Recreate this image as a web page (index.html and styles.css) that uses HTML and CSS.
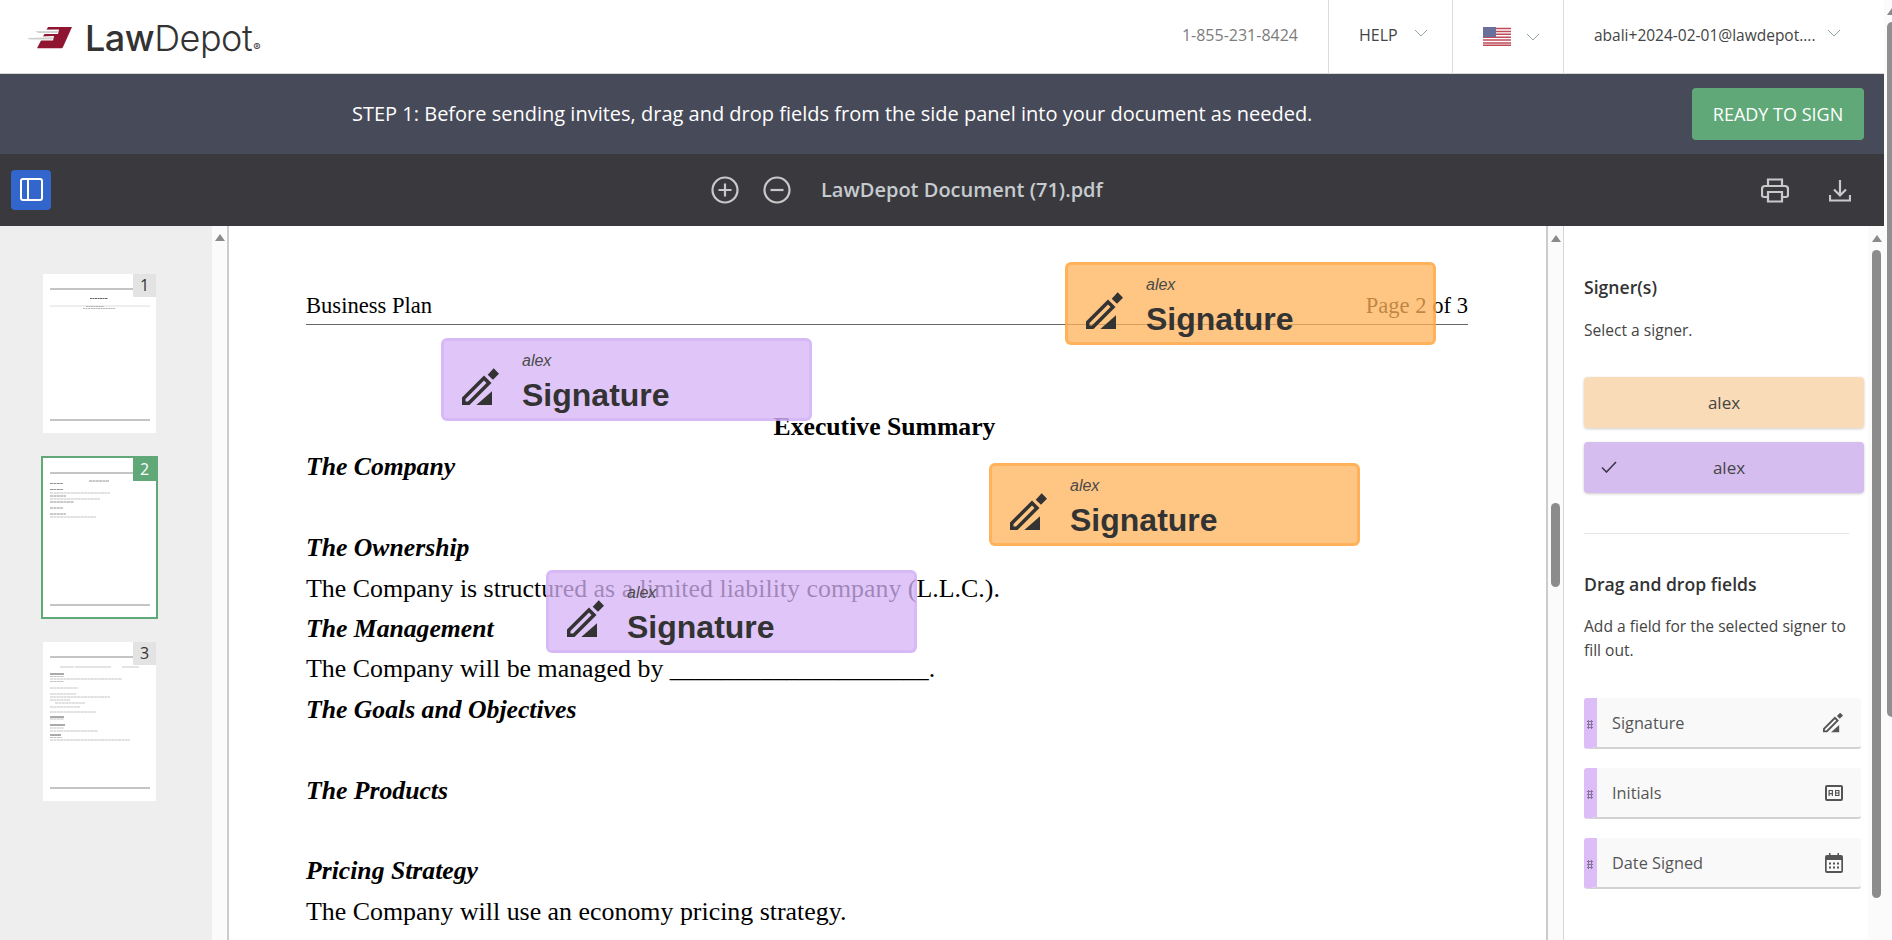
FILE: index.html
```html
<!DOCTYPE html>
<html lang="en">
<head>
    <meta charset="UTF-8">
    <meta name="viewport" content="width=device-width, initial-scale=1.0">
    <title>LawDepot - Sign Document</title>
    <link rel="stylesheet" href="styles.css">
</head>
<body>
    <svg class="icon-defs" width="0" height="0">
        <symbol id="pencil" viewBox="0 0 37 37">
            <path d="M25.700 6.700l6-6.400L37 5.700l-6 6z"/>
            <path fill-rule="evenodd" d="M0 37v-7.500L22 7.500 29.500 15l-22 22zM3.500 31v2.500H6L24.500 15 22 12.500z"/>
            <path d="M30 23.300V37H14.300z"/>
        </symbol>
    </svg>

    <div class="app">
        <header class="topbar">
            <div class="logo">
                <svg class="logo-mark" width="46" height="22" viewBox="0 0 46 22">
                    <path d="M21 0h24l-9 20c-.5 1-1 1.300-2 1.300H10z" fill="#8f1530"/>
                    <path d="M8 2.800l24-.300-1 4.500H12zM0 10l27-1-1 4.500H4z" fill="#fff"/>
                    <path d="M8 4.200l23-.300-.5 2.100H11.500zM0 11l26-.700-.5 2.200H3z" fill="#cfcfcf"/>
                </svg>
                <span class="logo-law">Law</span><span class="logo-depot">Depot</span><span class="logo-reg">®</span>
            </div>
            <nav class="topnav">
                <span class="nav-phone">1-855-231-8424</span>
                <div class="nav-item nav-help">HELP <svg class="chevron" viewBox="0 0 14 8"><path d="M1 1l6 6 6-6"/></svg></div>
                <div class="nav-item nav-lang">
                    <svg class="flag" viewBox="0 0 28 19">
                        <rect width="28" height="19" fill="#fff"/>
                        <path d="M0 1.500h28M0 4.400h28M0 7.300h28M0 10.200h28M0 13.100h28M0 16h28M0 18.300h28" stroke="#bf4a58" stroke-width="1.500"/>
                        <rect width="13" height="10" fill="#6a6f9c"/>
                    </svg>
                    <svg class="chevron" viewBox="0 0 14 8"><path d="M1 1l6 6 6-6"/></svg>
                </div>
                <div class="nav-item nav-user"><span>abali+2024-02-01@lawdepot....</span> <svg class="chevron" viewBox="0 0 14 8"><path d="M1 1l6 6 6-6"/></svg></div>
            </nav>
        </header>

        <section class="stepbar">
            <p class="step-text">STEP 1: Before sending invites, drag and drop fields from the side panel into your document as needed.</p>
            <button class="ready-btn">READY TO SIGN</button>
        </section>

        <section class="toolbar">
            <button class="panel-btn">
                <svg width="24" height="24" viewBox="0 0 24 24" fill="none" stroke="#fff" stroke-width="2"><rect x="2" y="2" width="21" height="21" rx="2"/><path d="M9 2v21"/></svg>
            </button>
            <div class="zoom-tools">
                <svg class="tool-icon" width="28" height="28" viewBox="0 0 28 28"><circle cx="14" cy="14" r="12.500"/><path d="M14 7.500v13M7.500 14h13"/></svg>
                <svg class="tool-icon" width="28" height="28" viewBox="0 0 28 28"><circle cx="14" cy="14" r="12.500"/><path d="M7.500 14h13"/></svg>
                <span class="doc-title">LawDepot Document (71).pdf</span>
            </div>
            <div class="doc-actions">
                <svg class="tool-icon" width="28" height="25" viewBox="0 0 28 25"><path d="M7 8V1.500h14V8M7 19H3c-1 0-2-1-2-2v-6c0-2 1-3 3-3h20c2 0 3 1 3 3v6c0 1-1 2-2 2h-4M7 14h14v9.500H7z"/></svg>
                <svg class="tool-icon" width="22" height="23" viewBox="0 0 22 23"><path d="M11 1v15M5 10.500l6 6 6-6M1 16v5.500h20V16"/></svg>
            </div>
        </section>

        <main class="workspace">
            <aside class="thumbs">
                <div class="thumb">
                    <span class="thumb-num">1</span>
                    <svg class="thumb-lines" viewBox="0 0 113 159">
                        <path d="M7 15h83M7 146h100" stroke="#8a8a8a"/>
                        <path d="M47 24.500h18" stroke="#666" stroke-dasharray="2 .5"/>
                        <path d="M7 32h100" stroke="#ddd"/>
                        <path d="M43 32.500h18M40 34.500h32" stroke="#999" stroke-width=".7" stroke-dasharray="2 .5"/>
                    </svg>
                </div>
                <div class="thumb thumb-active">
                    <span class="thumb-num">2</span>
                    <svg class="thumb-lines" viewBox="0 0 113 159">
                        <path d="M7 15h83M7 147h100" stroke="#8a8a8a"/>
                        <path d="M46 23h20M7 25.500h13M7 31.500h13M7 38h16M7 44h24M7 50h13M7 56h16" stroke="#888" stroke-width=".9" stroke-dasharray="3 .4"/>
                        <path d="M7 35h60M7 41h50M7 59h46" stroke="#b4b4b4" stroke-width=".8" stroke-dasharray="3 .4"/>
                    </svg>
                </div>
                <div class="thumb">
                    <span class="thumb-num">3</span>
                    <svg class="thumb-lines" viewBox="0 0 113 159">
                        <path d="M7 15h83M7 146h100" stroke="#8a8a8a"/>
                        <path d="M17 25h14M32 25h36M79 25h17" stroke="#bbb" stroke-width=".8"/>
                        <path d="M7 32h14M7 75h14M7 83h15M7 93h11" stroke="#444" stroke-width=".9"/>
                        <path d="M7 34.500h14M7 37h72M7 39.500h14M7 46h28M7 52h26M7 55h60M7 58h20M12 61h30M7 65h30M7 70h46M7 77h14M7 86h14M7 89h48M7 95.500h12M7 98h80" stroke="#b4b4b4" stroke-width=".8" stroke-dasharray="3 .4"/>
                    </svg>
                </div>
                <div class="strip"><span class="arrow-up"></span></div>
            </aside>

            <article class="document">
                <div class="page">
                    <div class="page-head"><span>Business Plan</span><span>Page 2 of 3</span></div>
                    <h3 class="page-title">Executive Summary</h3>
                    <p class="sub">The Company</p>
                    <p class="blank"></p>
                    <p class="sub">The Ownership</p>
                    <p>The Company is structured as a limited liability company (L.L.C.).</p>
                    <p class="sub">The Management</p>
                    <p>The Company will be managed by ____________________.</p>
                    <p class="sub">The Goals and Objectives</p>
                    <p class="blank"></p>
                    <p class="sub">The Products</p>
                    <p class="blank"></p>
                    <p class="sub">Pricing Strategy</p>
                    <p>The Company will use an economy pricing strategy.</p>
                </div>

                <div class="sig-field sig-orange sig-a">
                    <svg class="sig-icon"><use href="#pencil"/></svg>
                    <div><div class="sig-name">alex</div><div class="sig-label">Signature</div></div>
                </div>
                <div class="sig-field sig-purple sig-b">
                    <svg class="sig-icon"><use href="#pencil"/></svg>
                    <div><div class="sig-name">alex</div><div class="sig-label">Signature</div></div>
                </div>
                <div class="sig-field sig-orange sig-c">
                    <svg class="sig-icon"><use href="#pencil"/></svg>
                    <div><div class="sig-name">alex</div><div class="sig-label">Signature</div></div>
                </div>
                <div class="sig-field sig-purple sig-d">
                    <svg class="sig-icon"><use href="#pencil"/></svg>
                    <div><div class="sig-name">alex</div><div class="sig-label">Signature</div></div>
                </div>
            </article>

            <div class="doc-scroll">
                <span class="arrow-up"></span>
                <span class="doc-thumb"></span>
            </div>

            <aside class="side-panel">
                <h4>Signer(s)</h4>
                <p class="hint hint-signer">Select a signer.</p>
                <button class="signer signer-orange">alex</button>
                <button class="signer signer-purple">
                    <svg class="check" width="16" height="12" viewBox="0 0 16 12" fill="none" stroke="#3c3846" stroke-width="1.600"><path d="M1 6.500l4.500 4.500L15 1"/></svg>
                    <span>alex</span>
                </button>
                <hr class="divider">
                <h4>Drag and drop fields</h4>
                <p class="hint hint-fields">Add a field for the selected signer to fill out.</p>

                <div class="field">
                    <span class="grip"></span>
                    <span class="field-name">Signature</span>
                    <svg class="field-icon" width="20" height="21" viewBox="0 0 37 37"><use href="#pencil"/></svg>
                </div>
                <div class="field">
                    <span class="grip"></span>
                    <span class="field-name">Initials</span>
                    <svg class="field-icon" width="18" height="16" viewBox="0 0 18 16"><path fill-rule="evenodd" d="M2 0h14a2 2 0 0 1 2 2v12a2 2 0 0 1-2 2H2a2 2 0 0 1-2-2V2a2 2 0 0 1 2-2zm0 2v12h14V2z"/><path fill-rule="evenodd" d="M3.500 5h4.500v6H6.800V9.200H4.700V11H3.500zm1.200 1.100v2h2.100v-2zM10 5h4.500v6H10zm1.200 1.100v1.300h2.100V6.100zm0 2.400v1.400h2.100V8.500z"/></svg>
                </div>
                <div class="field">
                    <span class="grip"></span>
                    <span class="field-name">Date Signed</span>
                    <svg class="field-icon" width="18" height="20" viewBox="0 0 18 20"><path fill-rule="evenodd" d="M4 0h1.500v2h7V0H14v2h2a2 2 0 0 1 2 2v14a2 2 0 0 1-2 2H2a2 2 0 0 1-2-2V4a2 2 0 0 1 2-2h2zM1.700 7v11h14.600V7z"/><path d="M4 9.500h2v2H4zM8 9.500h2v2H8zM12 9.500h2v2h-2zM4 13.500h2v2H4zM8 13.500h2v2H8zM12 13.500h2v2h-2z"/></svg>
                </div>
                <div class="panel-scroll">
                    <span class="arrow-up"></span>
                    <span class="panel-thumb"></span>
                </div>
            </aside>
        </main>
    </div>

    <div class="page-scroll">
        <span class="arrow-up"></span>
        <span class="page-thumb"></span>
    </div>
</body>
</html>
```

FILE: styles.css
```css
body {
    margin: 0;
    height: 940px;
    overflow: hidden;
    display: flex;
    font-family: 'Open Sans', 'Noto Sans', sans-serif;
    color: #333;
    background-color: #fff;
}

.icon-defs {
    position: absolute;
}

.app {
    width: 1884px;
    flex-shrink: 0;
}

/* outer page scrollbar, only partly in view */
.page-scroll {
    flex: 1;
    background-color: #fbfbfb;
    position: relative;
    overflow: hidden;
}

.page-scroll .arrow-up {
    margin: 8px 0 0 3px;
}

.page-thumb {
    position: absolute;
    top: 22px;
    left: 3px;
    width: 10px;
    height: 695px;
    border-radius: 5px;
    background-color: #8f8f8f;
}

/* top bar */
.topbar {
    height: 73px;
    border-bottom: 1px solid #d8d8d8;
    display: flex;
    justify-content: space-between;
}

.logo {
    display: flex;
    align-items: baseline;
    padding: 15px 0 0 27px;
    font-family: 'Inter', 'Liberation Sans', sans-serif;
    font-size: 36px;
    color: #333;
    letter-spacing: -0.5px;
    line-height: 46px;
}

.logo-mark {
    align-self: flex-start;
    margin: 12px 12px 0 0;
}

.logo-law {
    font-weight: 500;
}

.logo-depot {
    font-weight: 300;
}

.logo-reg {
    font-size: 11px;
    letter-spacing: 0;
    margin-left: 1px;
}

.topnav {
    display: flex;
    align-items: stretch;
    font-size: 16px;
}

.nav-phone {
    color: #7c7c7c;
    align-self: center;
    margin: 0 30px 3px 0;
}

.nav-item {
    display: flex;
    align-items: center;
    border-left: 1px solid #dcdcdc;
    color: #444;
    padding-bottom: 4px;
    box-sizing: border-box;
}

.nav-help {
    width: 124px;
    padding-left: 30px;
    gap: 16px;
}

.nav-lang {
    width: 111px;
    padding-left: 30px;
    gap: 15px;
}

.nav-user {
    width: 321px;
    padding-left: 30px;
    gap: 11px;
    font-size: 15.5px;
    white-space: nowrap;
}

.chevron {
    width: 14px;
    height: 8px;
    fill: none;
    stroke: #93a4ab;
    stroke-width: 1;
    margin-bottom: 4px;
}

.nav-lang .chevron {
    margin: 4px 0 0 0;
}

.flag {
    width: 28px;
    height: 19px;
    margin-top: 4px;
}

/* step bar */
.stepbar {
    height: 80px;
    background-color: #474a59;
    display: flex;
    align-items: center;
    padding-right: 20px;
}

.step-text {
    margin: 0 0 2px 352px;
    color: #fff;
    font-size: 20px;
    white-space: nowrap;
}

.ready-btn {
    margin-left: auto;
    width: 172px;
    height: 52px;
    background-color: #60a877;
    color: #fff;
    border: none;
    border-radius: 4px;
    font-family: inherit;
    font-size: 18px;
    padding: 0;
}

/* document toolbar */
.toolbar {
    height: 72px;
    background-color: #3a393e;
    display: flex;
    align-items: center;
    padding-left: 11px;
}

.panel-btn {
    width: 40px;
    height: 40px;
    background-color: #3366cc;
    border: none;
    border-radius: 4px;
    padding: 7px 8px 9px 8px;
    display: flex;
}

.zoom-tools {
    display: flex;
    align-items: center;
    gap: 24px;
    margin-left: 660px;
}

.doc-title {
    color: #c6cbd0;
    font-size: 20px;
    font-weight: 600;
    margin: 0 0 2px 6px;
}

.doc-actions {
    display: flex;
    align-items: center;
    gap: 40px;
    margin-left: auto;
    margin-right: 33px;
}

.tool-icon {
    fill: none;
    stroke: #c9c9c9;
    stroke-width: 2.200;
}

/* main area */
.workspace {
    height: 714px;
    display: flex;
    overflow: hidden;
}

.thumbs {
    width: 212px;
    background-color: #eee;
    position: relative;
    padding-top: 48px;
    box-sizing: border-box;
    flex-shrink: 0;
    margin-right: 15px;
    display: flex;
    flex-direction: column;
    align-items: flex-start;
    gap: 25px;
}

.thumb {
    width: 113px;
    height: 159px;
    margin-left: 43px;
    background-color: #fff;
    position: relative;
    flex-shrink: 0;
}

.thumb-active {
    outline: 2px solid #60a877;
}

.thumb-lines {
    display: block;
    width: 113px;
    height: 159px;
}

.thumb-num {
    position: absolute;
    top: 0;
    right: 0;
    width: 23px;
    height: 23px;
    line-height: 23px;
    background-color: #e3e3e3;
    text-align: center;
    font-size: 16px;
    color: #333;
}

.thumb-active .thumb-num {
    background-color: #60a877;
    color: #fff;
}

.strip {
    position: absolute;
    top: 0;
    left: 212px;
    width: 15px;
    height: 100%;
    background-color: #fbfbfb;
}

.arrow-up {
    display: block;
    width: 0;
    height: 0;
    border-left: 5px solid transparent;
    border-right: 5px solid transparent;
    border-bottom: 7px solid #8a8a8a;
}

.strip .arrow-up {
    margin: 8px 0 0 3px;
}

.document {
    width: 1317px;
    border-left: 2px solid #ccc;
    border-right: 2px solid #ccc;
    flex-shrink: 0;
    position: relative;
}

.page {
    padding: 60px 78px 0 77px;
    font-family: 'Liberation Serif', 'Times New Roman', serif;
    font-size: 25.9px;
    line-height: 40.4px;
    color: #000;
}

.page p {
    margin: 0;
}

.page .blank {
    height: 40.4px;
}

.page-head {
    display: flex;
    justify-content: space-between;
    border-bottom: 1px solid #666;
    height: 38px;
    font-size: 22.6px;
}

.page-title {
    margin: 82px 5px 0 0;
    font-size: 25.7px;
    text-align: center;
}

.page .sub {
    font-size: 25.7px;
    font-weight: bold;
    font-style: italic;
}

/* fields dropped on the page */
.sig-field {
    position: absolute;
    width: 371px;
    height: 83px;
    box-sizing: border-box;
    border: 3px solid;
    border-radius: 6px;
    display: flex;
    padding-left: 18px;
    font-family: 'Liberation Sans', Arial, sans-serif;
    color: #333;
}

.sig-orange {
    background-color: rgba(255, 178, 90, 0.75);
    border-color: rgba(255, 160, 50, 0.5);
}

.sig-purple {
    background-color: rgba(214, 179, 246, 0.75);
    border-color: rgba(200, 160, 245, 0.35);
}

.sig-a { left: 836px; top: 36px; }
.sig-b { left: 212px; top: 112px; }
.sig-c { left: 760px; top: 237px; }
.sig-d { left: 317px; top: 344px; }

.sig-icon {
    width: 37px;
    height: 37px;
    fill: #333;
    margin: 27px 23px 0 0;
    flex-shrink: 0;
}

.sig-name {
    font-size: 16px;
    font-style: italic;
    line-height: 18px;
    margin-top: 11px;
    color: #4a4a4a;
}

.sig-label {
    font-size: 32px;
    font-weight: bold;
    line-height: 38px;
    margin-top: 6px;
}

.doc-scroll {
    width: 15px;
    background-color: #fbfbfb;
    position: relative;
    flex-shrink: 0;
}

.doc-scroll .arrow-up {
    margin: 9px 0 0 3px;
}

.doc-thumb {
    position: absolute;
    top: 277px;
    left: 3px;
    width: 9px;
    height: 84px;
    border-radius: 5px;
    background-color: #8c8c8c;
}

/* side panel */
.side-panel {
    flex: 1;
    border-left: 1px solid #d6d6d6;
    padding-left: 20px;
    position: relative;
}

.side-panel h4 {
    margin: 0;
    font-size: 17.6px;
    font-weight: 600;
    line-height: 22px;
    color: #333;
}

.side-panel h4:first-child {
    margin-top: 50px;
}

.hint {
    margin: 0;
    font-size: 15.6px;
    line-height: 24px;
    color: #444;
    width: 270px;
}

.hint-signer {
    margin-top: 20px;
    margin-bottom: 35px;
}

.hint-fields {
    margin-top: 19px;
    margin-bottom: 36px;
}

.signer {
    display: flex;
    align-items: center;
    justify-content: center;
    width: 280px;
    height: 51px;
    border: none;
    border-radius: 4px;
    font-family: inherit;
    font-size: 17px;
    color: #444;
    box-shadow: 0 1px 3px rgba(0, 0, 0, 0.2);
    position: relative;
    padding: 0;
}

.signer-orange {
    background-color: #f9dcb7;
    margin-bottom: 14px;
}

.signer-purple {
    background-color: #d6bdf0;
}

.signer-purple span {
    margin-left: 10px;
}

.check {
    position: absolute;
    left: 17px;
    top: 19px;
}

.divider {
    width: 265px;
    margin: 40px 0 39px 0;
    border: none;
    border-top: 1px solid #e4e4e4;
}

.field {
    width: 277px;
    height: 51px;
    box-sizing: border-box;
    background-color: #f9f9f9;
    border-left: 13px solid #dcbdf7;
    border-bottom: 2px solid #d2d2d2;
    border-radius: 3px;
    display: flex;
    align-items: center;
    margin-bottom: 19px;
    position: relative;
    padding: 0 18px 0 15px;
    font-size: 16.3px;
    color: #555;
}

.grip {
    position: absolute;
    left: -10px;
    top: 22px;
    width: 6px;
    height: 9px;
    background-image: radial-gradient(circle, #86749a 1px, transparent 1.100px);
    background-size: 3px 3px;
}

.field-name {
    flex: 1;
}

.field-icon {
    fill: #555;
}

.panel-scroll {
    position: absolute;
    top: 0;
    right: 0;
    width: 16px;
    height: 100%;
    background-color: #fbfbfb;
}

.panel-scroll .arrow-up {
    margin: 9px 0 0 4px;
}

.panel-thumb {
    position: absolute;
    top: 24px;
    left: 4px;
    width: 9px;
    height: 648px;
    border-radius: 5px;
    background-color: #8c8c8c;
}
```
